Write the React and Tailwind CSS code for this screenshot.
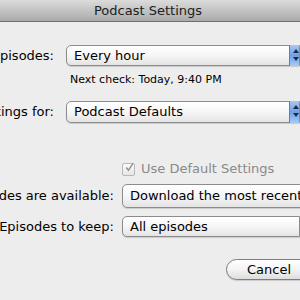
import React from "react";

const font = { fontFamily: '"DejaVu Sans", "Liberation Sans", sans-serif' };

function Popup({ text, arrow = false, height = "h-[21px]" }) {
  return (
    <div className={`relative flex ${height} flex-1 items-center rounded-l-[5px] border border-[#8c8c8c] bg-gradient-to-b from-[#ffffff] via-[#f6f6f6] to-[#e4e4e4] pl-[7px] shadow-[0_1px_1px_rgba(0,0,0,0.15)]`}>
      <span className="whitespace-nowrap text-[13px] leading-[16px] text-black">{text}</span>
      {arrow && (
        <div className="absolute right-0 top-[-1px] bottom-[-1px] w-[10px] border-l border-[#5a7fb8] bg-gradient-to-b from-[#a9c8f0] via-[#6fa0e4] to-[#a5cbf5]">
          <svg width="10" height="21" viewBox="0 0 10 21" className="absolute left-[3px] top-0">
            <path d="M0 8 L3 4 L6 8 Z" fill="#1b2a4a" />
            <path d="M0 12 L3 16 L6 12 Z" fill="#1b2a4a" />
          </svg>
        </div>
      )}
    </div>
  );
}

function Label({ text, width }) {
  return (
    <div className={`flex shrink-0 justify-end ${width}`}>
      <span className="shrink-0 whitespace-nowrap text-[13px] leading-[16px] text-black">{text}</span>
    </div>
  );
}

export default function App() {
  return (
    <div className="h-[300px] w-[300px] overflow-hidden bg-[#ededed]" style={font}>
      <div className="flex h-[22px] items-center justify-center border-b border-[#6f6f6f] bg-gradient-to-b from-[#dcdcdc] to-[#aaaaaa]">
        <span className="pr-[4px] text-[13px] leading-[16px] text-[#202020]">Podcast Settings</span>
      </div>

      <div className="flex flex-col">
        <div className="mt-[23px] flex items-center">
          <Label text="Check for new episodes:" width="w-[54px]" />
          <div className="ml-[12px] flex flex-1">
            <Popup text="Every hour" arrow />
          </div>
        </div>
        <div className="ml-[70px] mt-[7px] whitespace-nowrap text-[11px] leading-[14px] text-black">
          Next check: Today, 9:40 PM
        </div>

        <div className="mt-[14px] flex items-center">
          <Label text="Settings for:" width="w-[54px]" />
          <div className="ml-[12px] flex flex-1">
            <Popup text="Podcast Defaults" arrow height="h-[22px]" />
          </div>
        </div>

        <div className="ml-[122px] mt-[38px] flex h-[16px] items-center gap-[6px]">
          <div className="flex h-[13px] w-[13px] items-center justify-center rounded-[2px] border border-[#b8b8b8] bg-gradient-to-b from-[#fafafa] to-[#e6e6e6]">
            <svg width="13" height="13" viewBox="0 0 13 13" className="-mt-[3px] ml-[2px]">
              <path d="M2 6.5 L5 10.5 L11.5 0.5" fill="none" stroke="#8f8f8f" strokeWidth="2" />
            </svg>
          </div>
          <span className="whitespace-nowrap text-[13px] leading-[16px] text-[#8a8a8a]">Use Default Settings</span>
        </div>

        <div className="mt-[7px] flex items-center">
          <Label text="When new episodes are available:" width="w-[114px]" />
          <div className="ml-[8px] flex flex-1">
            <Popup text="Download the most recent one" height="h-[24px]" />
          </div>
        </div>

        <div className="mt-[8px] flex items-center">
          <Label text="Episodes to keep:" width="w-[114px]" />
          <div className="ml-[8px] flex flex-1">
            <Popup text="All episodes" />
          </div>
        </div>

        <div className="ml-[226px] mt-[22px] flex h-[21px] w-[110px] shrink-0 items-center rounded-full border border-[#7e7e7e] bg-gradient-to-b from-[#ffffff] via-[#f4f4f4] to-[#dedede] pl-[20px] shadow-[0_1px_1px_rgba(0,0,0,0.15)]">
          <span className="text-[13px] leading-[16px] text-black">Cancel</span>
        </div>
      </div>
    </div>
  );
}
